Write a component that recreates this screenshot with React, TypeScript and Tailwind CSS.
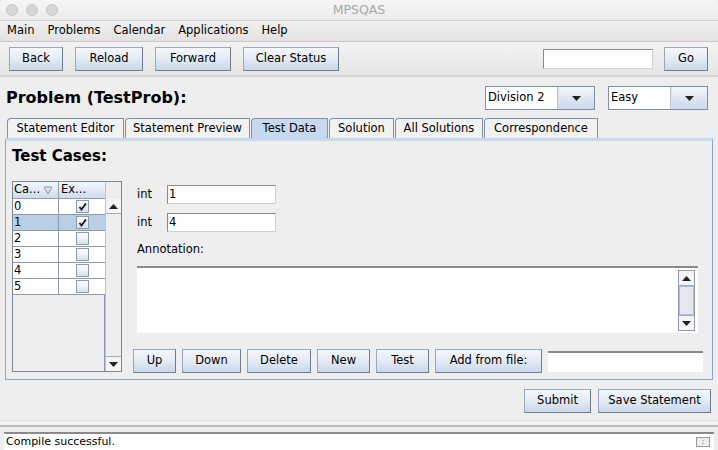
import React from "react";

const btn =
  "h-[24px] shrink-0 flex items-center justify-center border border-[#9aa7b8] border-r-[#6f7d90] border-b-[#6f7d90] bg-gradient-to-b from-[#f4f7fb] via-[#e3ebf5] to-[#c9d8ea] text-[11.5px] text-black";

function Btn({ label, w }: { label: string; w: string }) {
  return <div className={`${btn} ${w}`}>{label}</div>;
}

function Arrow({ up }: { up?: boolean }) {
  return (
    <svg width="9" height="5" viewBox="0 0 9 5">
      {up ? <polygon points="0,5 9,5 4.5,0" fill="#222" /> : <polygon points="0,0 9,0 4.5,5" fill="#222" />}
    </svg>
  );
}

function Check({ on }: { on: boolean }) {
  return (
    <div className="w-[13px] h-[13px] border border-[#8c9bb0] bg-gradient-to-b from-[#ffffff] to-[#d5e1ee] flex items-center justify-center">
      {on && (
        <svg width="9" height="9" viewBox="0 0 9 9">
          <path d="M1.5 5 L3.5 7.5 L8 1.5" stroke="#111" strokeWidth="1.8" fill="none" />
        </svg>
      )}
    </div>
  );
}

function Combo({ label, w }: { label: string; w: string }) {
  return (
    <div className={`h-[24px] flex border border-[#7f8fa6] bg-white ${w}`}>
      <div className="flex-1 flex items-center pl-[2px] text-[11.5px] border-r border-[#b8c4d2]">{label}</div>
      <div className="w-[36px] flex items-center justify-center bg-gradient-to-b from-[#f4f7fb] to-[#c9d8ea] border-l border-[#d8e2ee]">
        <Arrow />
      </div>
    </div>
  );
}

function Tab({ label, w, sel }: { label: string; w: string; sel?: boolean }) {
  return (
    <div
      className={`h-[20px] ${w} shrink-0 flex items-center justify-center text-[11.5px] border border-b-0 border-[#8091a8] rounded-tl-[4px] ${
        sel ? "bg-[#c7d9ee]" : "bg-[#f2f2f2]"
      }`}
    >
      {label}
    </div>
  );
}

export default function App() {
  const rows = [
    { n: "0", c: true },
    { n: "1", c: true, s: true },
    { n: "2", c: false },
    { n: "3", c: false },
    { n: "4", c: false },
    { n: "5", c: false },
  ];
  return (
    <div
      className="w-[718px] h-[450px] overflow-hidden bg-[#eeeeee] text-black flex flex-col"
      style={{ fontFamily: '"DejaVu Sans", "Noto Sans", sans-serif' }}
    >
      {/* title bar */}
      <div className="h-[21px] shrink-0 relative flex items-center bg-gradient-to-b from-[#f6f6f6] to-[#ececec] border-b border-[#cfcfcf] rounded-t-[5px]">
        <div className="flex gap-[8px] pl-[6px]">
          <div className="w-[12px] h-[12px] rounded-full bg-[#d6d6d6] border border-[#c6c6c6]" />
          <div className="w-[12px] h-[12px] rounded-full bg-[#d6d6d6] border border-[#c6c6c6]" />
          <div className="w-[12px] h-[12px] rounded-full bg-[#d6d6d6] border border-[#c6c6c6]" />
        </div>
        <div className="absolute inset-0 flex items-center justify-center text-[12.5px] text-[#a8a8a8]">MPSQAS</div>
      </div>
      {/* menu */}
      <div className="h-[21px] shrink-0 flex items-center gap-[13px] pl-[7px] text-[11.5px] bg-gradient-to-b from-[#f0f0f0] to-[#e2e2e2] border-b border-[#c9c9c9]">
        <span>Main</span>
        <span>Problems</span>
        <span>Calendar</span>
        <span>Applications</span>
        <span>Help</span>
      </div>
      {/* toolbar */}
      <div className="h-[35px] shrink-0 flex items-center pl-[9px] pr-[10px] bg-gradient-to-b from-[#f3f3f3] to-[#e6e6e6] border-b-[2px] border-double border-[#d4d4d4]">
        <div className="flex gap-[12px]">
          <Btn label="Back" w="w-[54px]" />
          <Btn label="Reload" w="w-[68px]" />
          <Btn label="Forward" w="w-[76px]" />
          <Btn label="Clear Status" w="w-[96px]" />
        </div>
        <div className="ml-auto flex items-center gap-[11px]">
          <div className="w-[110px] h-[20px] bg-white border border-[#8a8a8a] border-r-[#d0d0d0] border-b-[#d0d0d0]" />
          <Btn label="Go" w="w-[44px]" />
        </div>
      </div>
      {/* header */}
      <div className="h-[40px] shrink-0 flex items-center pl-[6px] pr-[10px] pt-[2px]">
        <div className="text-[16px] font-bold">Problem (TestProb):</div>
        <div className="ml-auto flex gap-[13px]">
          <Combo label="Division 2" w="w-[110px]" />
          <Combo label="Easy" w="w-[100px]" />
        </div>
      </div>
      {/* tabs */}
      <div className="shrink-0 flex gap-[1px] pl-[7px] h-[20px] mt-[1px]">
        <Tab label="Statement Editor" w="w-[117px]" />
        <Tab label="Statement Preview" w="w-[125px]" />
        <Tab label="Test Data" w="w-[77px]" sel />
        <Tab label="Solution" w="w-[65px]" />
        <Tab label="All Solutions" w="w-[88px]" />
        <Tab label="Correspondence" w="w-[114px]" />
      </div>
      {/* panel */}
      <div className="mx-[5px] h-[242px] shrink-0 border border-[#8ea5c4] border-t-[3px] border-t-[#c7d9ee] bg-[#eeeeee] flex flex-col pl-[6px] pr-[9px]">
        <div className="text-[15px] font-bold mt-[6px] leading-[18px]">Test Cases:</div>
        <div className="flex mt-[16px] gap-[15px]">
          {/* table */}
          <div className="w-[110px] h-[191px] shrink-0 border border-[#7a8799] flex bg-white">
            <div className="w-[92px] flex flex-col bg-white">
              <div className="flex h-[17px] text-[11.5px] border-b border-[#8ea0b8]">
                <div className="w-[46px] flex items-center pl-[1px] bg-gradient-to-b from-[#f4f7fb] to-[#cfdcec] border-r border-[#8ea0b8]">
                  Ca...
                  <svg width="10" height="9" viewBox="0 0 10 9" className="ml-[3px]">
                    <polygon points="1,1 9,1 5,8" fill="#dbe3ee" stroke="#8799b0" />
                  </svg>
                </div>
                <div className="flex-1 flex items-center pl-[2px] bg-gradient-to-b from-[#f4f7fb] to-[#cfdcec]">Ex...</div>
              </div>
              {rows.map((r) => (
                <div
                  key={r.n}
                  className={`flex h-[16px] text-[11.5px] border-b border-[#8e9aab] ${r.s ? "bg-[#b8cfe5]" : "bg-white"}`}
                >
                  <div className="w-[46px] pl-[1px] leading-[15px] border-r border-[#8e9aab]">{r.n}</div>
                  <div className="flex-1 flex items-center justify-center">
                    <Check on={r.c} />
                  </div>
                </div>
              ))}
              <div className="flex-1 bg-[#eeeeee] border-r border-[#8e9aab]" />
            </div>
            <div className="flex-1 flex flex-col bg-[#eeeeee] border-l border-[#b8c3d2]">
              <div className="h-[17px]" />
              <div className="h-[15px] flex items-center justify-center border-b border-[#a0adbd] bg-[#f4f4f4]">
                <Arrow up />
              </div>
              <div className="flex-1" />
              <div className="h-[15px] flex items-center justify-center border-t border-[#a0adbd] bg-[#f4f4f4]">
                <Arrow />
              </div>
            </div>
          </div>
          {/* fields */}
          <div className="flex-1 flex flex-col pt-[4px]">
            <div className="flex items-center gap-[15px] h-[19px] text-[11.5px]">
              <span>int</span>
              <div className="w-[109px] h-[19px] bg-white border border-[#8a8a8a] border-r-[#d0d0d0] border-b-[#d0d0d0] pl-[1px] leading-[17px]">1</div>
            </div>
            <div className="flex items-center gap-[15px] h-[19px] mt-[9px] text-[11.5px]">
              <span>int</span>
              <div className="w-[109px] h-[19px] bg-white border border-[#8a8a8a] border-r-[#d0d0d0] border-b-[#d0d0d0] pl-[1px] leading-[17px]">4</div>
            </div>
            <div className="text-[11.5px] mt-[9px] leading-[16px]">Annotation:</div>
            <div className="mt-[9px] h-[67px] w-[561px] bg-white border-t-[2px] border-[#8a8a8a] flex justify-end pr-[3px] pt-[2px] pb-[2px]">
              <div className="w-[17px] flex flex-col border border-[#8e9aab] bg-[#eeeeee]">
                <div className="h-[15px] flex items-center justify-center border-b border-[#a0adbd] bg-[#f4f4f4]">
                  <Arrow up />
                </div>
                <div className="flex-1 border border-[#a9bdd6] bg-[#e4e8ee]" />
                <div className="h-[15px] flex items-center justify-center border-t border-[#a0adbd] bg-[#f4f4f4]">
                  <Arrow />
                </div>
              </div>
            </div>
            <div className="flex items-center gap-[6px] mt-[16px] ml-[-4px]">
              <Btn label="Up" w="w-[43px]" />
              <Btn label="Down" w="w-[59px]" />
              <Btn label="Delete" w="w-[64px]" />
              <Btn label="New" w="w-[53px]" />
              <Btn label="Test" w="w-[53px]" />
              <Btn label="Add from file:" w="w-[107px]" />
              <div className="flex-1 min-w-0 h-[21px] bg-white border-t-[2px] border-[#8a8a8a]" />
            </div>
          </div>
        </div>
      </div>
      {/* bottom buttons */}
      <div className="h-[40px] shrink-0 flex items-center justify-end gap-[7px] pr-[7px] pt-[2px]">
        <Btn label="Submit" w="w-[67px]" />
        <Btn label="Save Statement" w="w-[113px]" />
      </div>
      <div className="h-[7px] shrink-0 border-t border-[#dcdcdc] border-b-[2px] border-b-dotted border-b-[#bdbdbd] bg-[#f3f3f3]" />
      <div className="flex-1 flex items-start pt-[5px] px-[4px]">
        <div className="w-full h-[18px] bg-white border-t-[2px] border-[#8a8a8a] flex items-center justify-between pl-[2px] pr-[4px] text-[11px] leading-[14px]">
          <span>Compile successful.</span>
          <div className="w-[14px] h-[10px] border border-[#9a9a9a] bg-[#eeeeee] flex items-center justify-center text-[7px] leading-none">:</div>
        </div>
      </div>
    </div>
  );
}
